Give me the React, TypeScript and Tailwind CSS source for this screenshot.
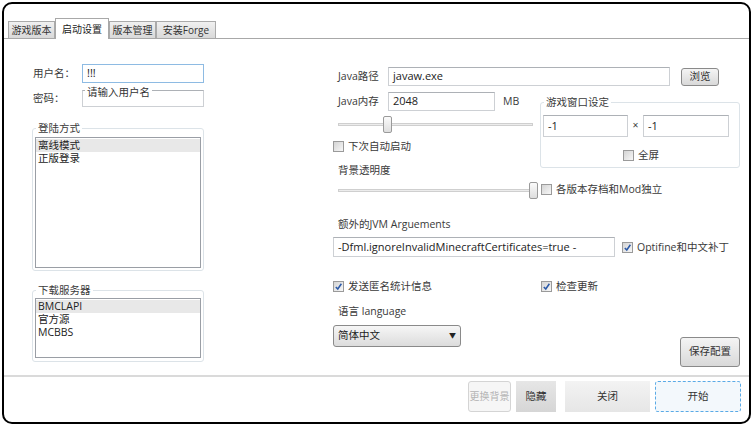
import React from "react";

const font = "font-['Open_Sans','Noto_Sans_CJK_SC',sans-serif]";

function Tick() {
  return (
    <svg width="9" height="9" viewBox="0 0 10 10">
      <path d="M2 5.5 L4.2 7.8 L8.2 2" fill="none" stroke="#2c5aa8" strokeWidth="1.7" />
    </svg>
  );
}

function Check({ checked, label }: { checked?: boolean; label: string }) {
  return (
    <div className="flex h-[12px] items-center gap-[4px]">
      <span className="flex h-[11px] w-[11px] items-center justify-center border border-[#9a9a9a] bg-gradient-to-br from-[#d4d4d4] to-[#f7f7f7]">
        {checked && <Tick />}
      </span>
      <span className="text-[10.5px] leading-[12px] text-[#3a3a3a]">{label}</span>
    </div>
  );
}

function Field({ value, w, h = 19, focus }: { value: string; w: number; h?: number; focus?: boolean }) {
  return (
    <div
      className={`flex items-center border bg-white pl-[4px] text-[11px] text-[#222] ${
        focus ? "border-[#8ebbe3]" : "border-[#cdd0d4] border-t-[#adb1b6]"
      }`}
      style={{ width: w, height: h }}
    >
      {value}
    </div>
  );
}

function Slider({ at }: { at: number }) {
  return (
    <div className="relative flex h-[17px] w-[195px] items-center">
      <div className="h-[3px] w-full border border-[#cfcfcf] bg-[#ececec]" />
      <div
        className="absolute top-0 h-[17px] w-[9px] rounded-[2px] border border-[#9a9a9a] bg-gradient-to-b from-[#fbfbfb] to-[#dedede]"
        style={{ left: at }}
      />
    </div>
  );
}

function Group({ title, className, children }: { title: string; className: string; children: React.ReactNode }) {
  return (
    <div className={`relative rounded-[3px] border border-[#dce3e8] ${className}`}>
      <span className="absolute -top-[8px] left-[3px] bg-white px-[2px] text-[10.5px] leading-[14px] text-[#3a3a3a]">{title}</span>
      {children}
    </div>
  );
}

function ListBox({ items, className }: { items: string[]; className: string }) {
  return (
    <div className={`border border-[#9a9ea5] bg-white pt-[1px] ${className}`}>
      {items.map((it, i) => (
        <div key={it} className={`pl-[2px] text-[10.5px] leading-[13px] text-[#222] ${i === 0 ? "bg-[#e8e8e8]" : ""}`}>
          {it}
        </div>
      ))}
    </div>
  );
}

export default function App() {
  const tabs = [
    { name: "游戏版本", w: 47 },
    { name: "启动设置", w: 54, active: true },
    { name: "版本管理", w: 47 },
    { name: "安装Forge", w: 60 },
  ];

  return (
    <div className={`h-[426px] w-[754px] bg-white pl-[2px] pt-[2px] ${font}`}>
      <div className="flex h-[422px] w-[749px] flex-col overflow-hidden rounded-[10px] border-2 border-black bg-white">
        {/* tabs */}
        <div className="flex h-[35px] items-end border-b border-[#a8a8a8] pl-[4px]">
          {tabs.map(t =>
            t.active ? (
              <div
                key={t.name}
                className="relative z-10 -mb-px flex h-[21px] items-center justify-center border border-b-0 border-[#a8a8a8] bg-white text-[10px] text-[#222]"
                style={{ width: t.w }}
              >
                {t.name}
              </div>
            ) : (
              <div
                key={t.name}
                className="flex h-[17px] items-center justify-center border border-b-0 border-[#aaaaaa] bg-gradient-to-b from-[#f0f0f0] to-[#d9d9d9] text-[10px] text-[#333]"
                style={{ width: t.w }}
              >
                {t.name}
              </div>
            )
          )}
        </div>

        {/* body */}
        <div className="flex h-[336px]">
          {/* left column */}
          <div className="ml-[28px] flex w-[172px] flex-col pt-[25px]">
            <div className="flex h-[19px] items-center">
              <span className="w-[50px] pl-[1px] text-[10.5px] text-[#3a3a3a]">用户名：</span>
              <Field value="!!!" w={122} focus />
            </div>
            <div className="mt-[7px] flex h-[17px] items-center">
              <span className="w-[50px] pl-[1px] text-[10.5px] text-[#3a3a3a]">密码：</span>
              <div className="relative">
                <Field value="" w={122} h={17} />
                <span className="absolute -top-[5px] left-[3px] bg-white px-[2px] text-[10.5px] leading-[14px] text-[#333]">
                  请输入用户名
                </span>
              </div>
            </div>

            <Group title="登陆方式" className="mt-[21px] h-[143px] px-[2px] pb-[2px] pt-[8px]">
              <ListBox items={["离线模式", "正版登录"]} className="h-full" />
            </Group>

            <Group title="下载服务器" className="mt-[19px] h-[72px] px-[2px] pb-[3px] pt-[7px]">
              <ListBox items={["BMCLAPI", "官方源", "MCBBS"]} className="h-full" />
            </Group>
          </div>

          {/* right column */}
          <div className="ml-[129px] flex w-[408px] flex-col pt-[28px]">
            <div className="flex h-[19px] items-center">
              <span className="w-[55px] pl-[5px] text-[10.5px] text-[#3a3a3a]">Java路径</span>
              <Field value="javaw.exe" w={282} />
              <button className="ml-[11px] h-[18px] w-[38px] rounded-[3px] border border-[#8a8a8a] bg-gradient-to-b from-[#f4f4f4] to-[#d9d9d9] text-[10.5px] text-[#333]">
                浏览
              </button>
            </div>

            <div className="mt-[6px] flex">
              <div className="flex w-[207px] flex-col">
                <div className="flex h-[19px] items-center">
                  <span className="w-[55px] pl-[5px] text-[10.5px] text-[#3a3a3a]">Java内存</span>
                  <Field value="2048" w={107} />
                  <span className="ml-[8px] text-[10.5px] text-[#3a3a3a]">MB</span>
                </div>
                <div className="ml-[5px] mt-[5px]">
                  <Slider at={45} />
                </div>
                <div className="mt-[7px]">
                  <Check label="下次自动启动" />
                </div>
                <div className="mt-[11px] pl-[5px] text-[10.5px] leading-[14px] text-[#3a3a3a]">背景透明度</div>
                <div className="ml-[5px] mt-[5px]">
                  <Slider at={191} />
                </div>
              </div>

              <div className="flex w-[200px] flex-col">
                <Group title="游戏窗口设定" className="mt-[10px] h-[66px] pl-[2px] pt-[12px]">
                  <div className="flex items-center">
                    <Field value="-1" w={85} h={22} />
                    <span className="w-[15px] text-center text-[10.5px] text-[#3a3a3a]">×</span>
                    <Field value="-1" w={86} h={22} />
                  </div>
                  <div className="mt-[12px] flex justify-center">
                    <Check label="全屏" />
                  </div>
                </Group>
                <div className="ml-[1px] mt-[15px]">
                  <Check label="各版本存档和Mod独立" />
                </div>
              </div>
            </div>

            <div className="mt-[18px] pl-[5px] text-[10.5px] leading-[14px] text-[#3a3a3a]">额外的JVM Arguements</div>
            <div className="mt-[6px] flex h-[20px] items-center">
              <Field value="-Dfml.ignoreInvalidMinecraftCertificates=true -" w={282} h={20} />
              <div className="ml-[7px]">
                <Check checked label="Optifine和中文补丁" />
              </div>
            </div>

            <div className="mt-[23px] flex">
              <div className="w-[208px]">
                <Check checked label="发送匿名统计信息" />
              </div>
              <Check checked label="检查更新" />
            </div>

            <div className="mt-[12px] pl-[5px] text-[10.5px] leading-[14px] text-[#3a3a3a]">语言 language</div>
            <div className="mt-[7px] flex items-start">
              <div className="flex h-[22px] w-[128px] items-center justify-between rounded-[3px] border border-[#8a8a8a] bg-gradient-to-b from-[#f6f6f6] to-[#dcdcdc] px-[4px] text-[10.5px] text-[#222]">
                <span>简体中文</span>
                <span className="text-[7px]">▼</span>
              </div>
              <button className="ml-auto mr-[1px] mt-[12px] h-[30px] w-[60px] rounded-[3px] border border-[#8a8a8a] bg-gradient-to-b from-[#f4f4f4] to-[#d9d9d9] text-[10.5px] text-[#333]">
                保存配置
              </button>
            </div>
          </div>
        </div>

        {/* footer */}
        <div className="flex flex-1 items-start justify-end border-t-2 border-[#dadada] pr-[8px] pt-[4px]">
          <button className="h-[31px] w-[43px] rounded-[3px] border border-[#d4d4d4] bg-[#f6f6f6] text-[10px] text-[#b4b4b4]">
            更换背景
          </button>
          <button className="ml-[5px] h-[31px] w-[40px] bg-gradient-to-b from-[#e6e6e6] to-[#d6d6d6] text-[10.5px] text-[#333]">
            隐藏
          </button>
          <button className="ml-[9px] h-[31px] w-[85px] bg-gradient-to-b from-[#f3f3f3] to-[#e6e6e6] text-[10.5px] text-[#333]">
            关闭
          </button>
          <button className="ml-[5px] h-[31px] w-[86px] rounded-[3px] border border-dashed border-[#5aaae6] bg-[#f3f8fc] text-[10.5px] text-[#333]">
            开始
          </button>
        </div>
      </div>
    </div>
  );
}
